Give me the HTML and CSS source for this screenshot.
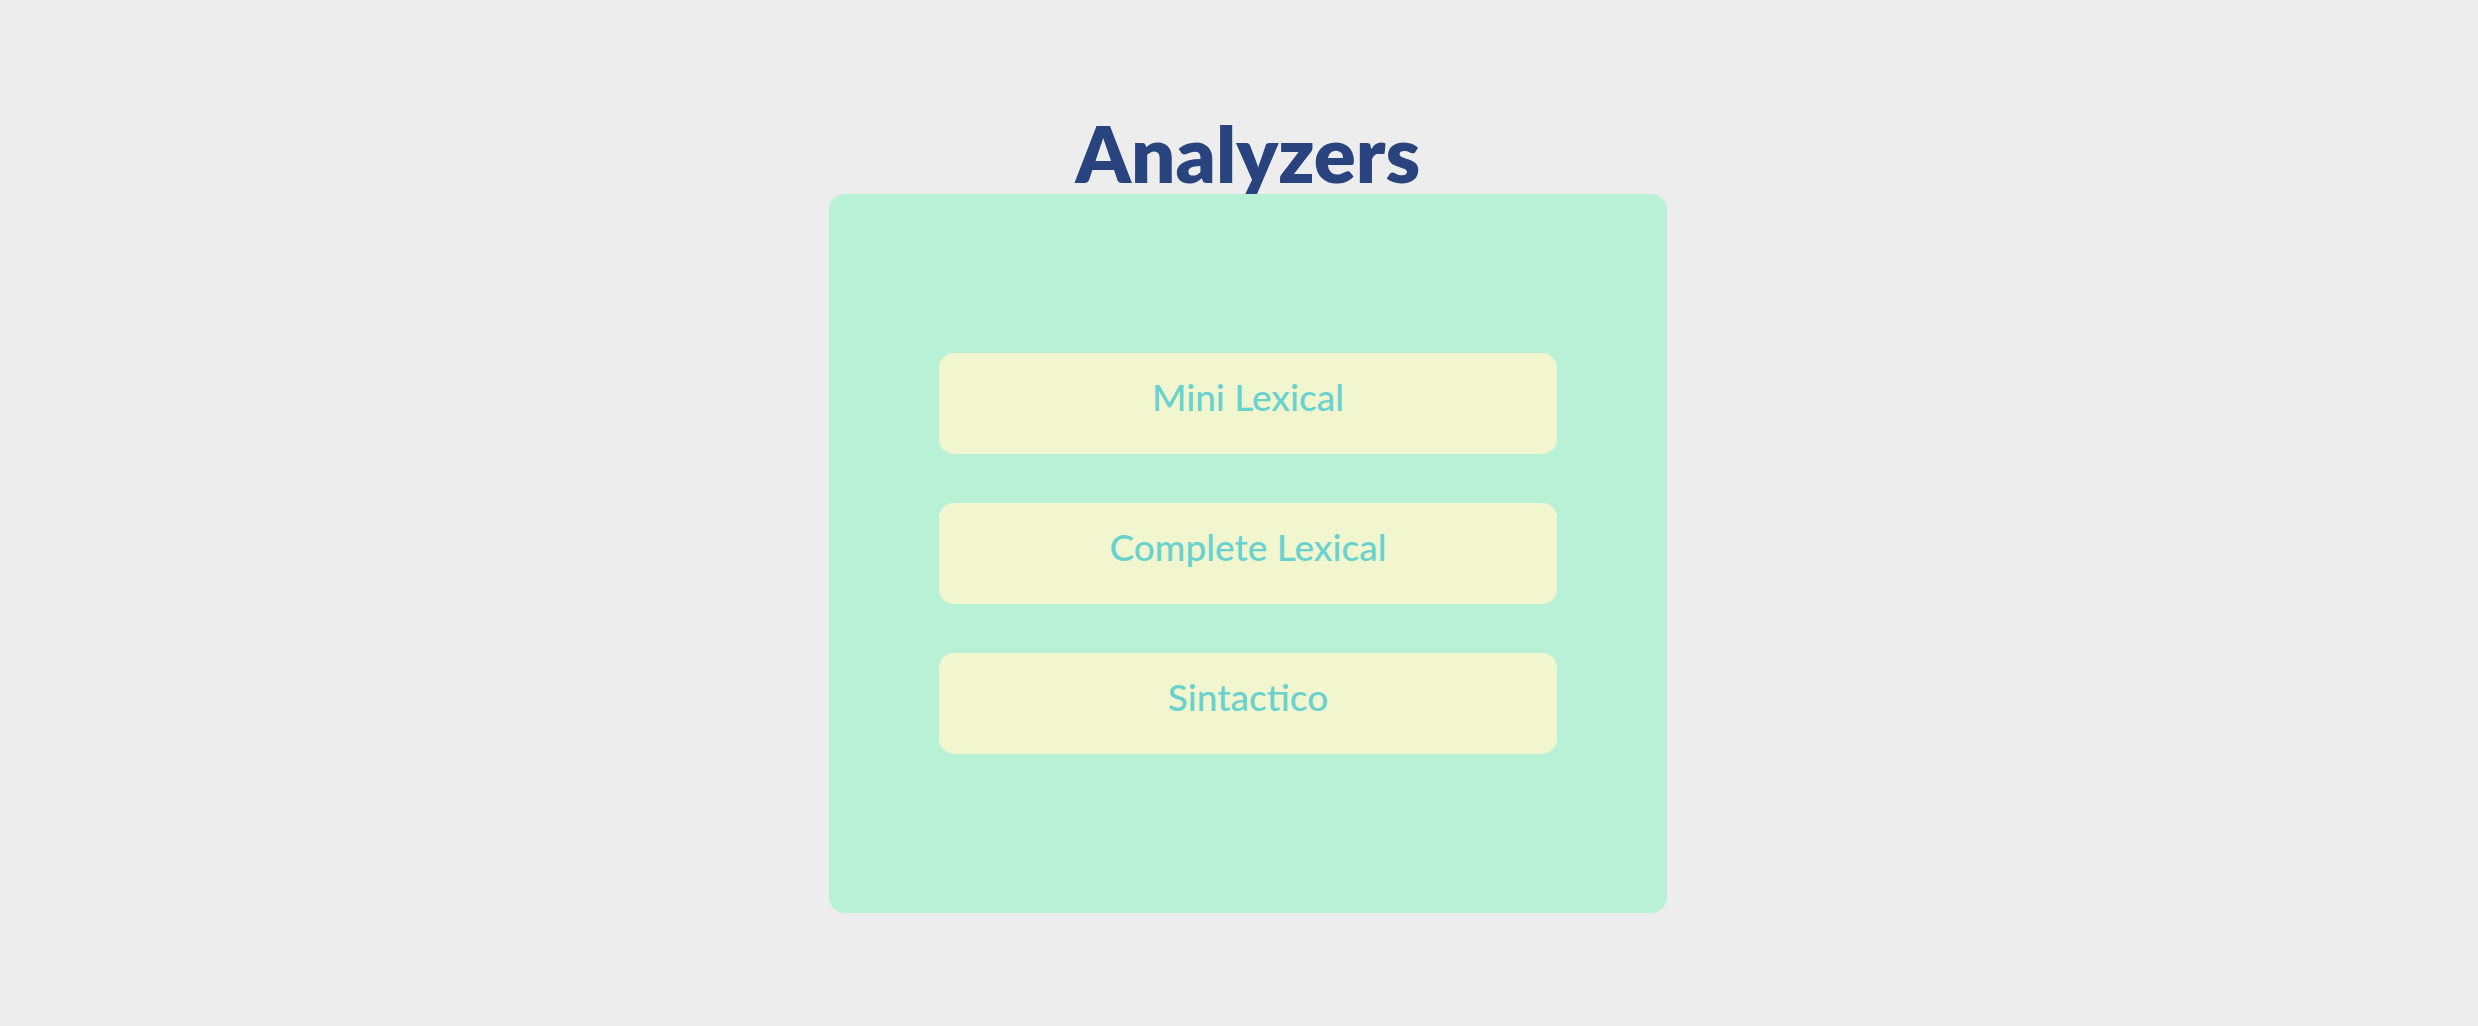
FILE: index.html
```html
<!DOCTYPE html>
<html lang="en">
<head>
<meta charset="utf-8">
<title>Analyzers</title>
<link rel="stylesheet" href="styles.css">
</head>
<body>
  <main class="page">
    <h1 class="title">Analyzers</h1>
    <section class="card">
      <button class="option" type="button">Mini Lexical</button>
      <button class="option" type="button">Complete Lexical</button>
      <button class="option" type="button">Sintactico</button>
    </section>
  </main>
</body>
</html>
```
FILE: styles.css
```css
html, body {
  margin: 0;
  padding: 0;
  background: #ededed;
}

body {
  font-family: Lato, "Open Sans", sans-serif;
}

.page {
  display: flex;
  flex-direction: column;
  align-items: center;
  padding-top: 114px;
  padding-left: 18px;
}

.title {
  margin: 0;
  font-family: Lato, "Open Sans", sans-serif;
  font-size: 78px;
  line-height: 78px;
  font-weight: 800;
  color: #29437f;
  height: 80px;
}

.card {
  position: relative;
  box-sizing: border-box;
  width: 838px;
  height: 719px;
  background: #b9f1d6;
  border-radius: 16px;
  padding: 159px 110px 0;
  display: flex;
  flex-direction: column;
  gap: 49px;
}

.option {
  box-sizing: border-box;
  height: 101px;
  width: 100%;
  border: none;
  border-radius: 15px;
  background: #f1f6cf;
  color: #68d2ce;
  font-family: Lato, "Open Sans", sans-serif;
  font-size: 37px;
  font-weight: 500;
  line-height: normal;
  padding: 21px 0 0;
  display: flex;
  justify-content: center;
  align-items: flex-start;
}
```
